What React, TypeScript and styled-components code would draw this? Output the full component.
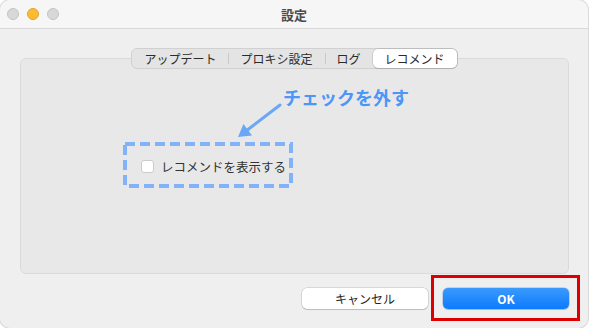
import styled, { createGlobalStyle } from 'styled-components';

const GlobalStyle = createGlobalStyle`
  html, body {
    margin: 0;
    background: #ffffff;
  }
  body {
    font-family: 'Noto Sans CJK JP', 'Noto Sans', sans-serif;
    -webkit-font-smoothing: antialiased;
  }
`;

const tabs = ['アップデート', 'プロキシ設定', 'ログ', 'レコメンド'];
const selectedTab = 3;

const App = () => {
  return (
    <>
      <GlobalStyle />
      <Window>
        <TitleBar>
          <Lights>
            <Light />
            <Light $color="#fdbc2f" $ring="#dea236" />
            <Light />
          </Lights>
          <Title>設定</Title>
          <span />
        </TitleBar>
        <Body>
          <TabView>
            <Segmented>
              {tabs.map((t, i) => (
                <Tab key={t} $selected={i === selectedTab} $divider={i > 0 && i !== selectedTab && i - 1 !== selectedTab}>
                  {t}
                </Tab>
              ))}
            </Segmented>
            <Panel>
              <Highlight>
                <DashedFrame width="170" height="46" viewBox="0 0 170 46">
                  <rect x="2" y="2" width="166" height="42" fill="none" stroke="#80b3fa" strokeWidth="4" strokeDasharray="10 5" />
                </DashedFrame>
                <Callout>チェックを外す</Callout>
                <Arrow width="54" height="42" viewBox="0 0 54 42">
                  <line x1="47" y1="5" x2="15" y2="29.5" stroke="#6aa7f7" strokeWidth="3" strokeLinecap="round" />
                  <polygon points="5,37 19,35.5 10.5,24" fill="#6aa7f7" />
                </Arrow>
                <CheckRow>
                  <CheckBox />
                  <CheckLabel>レコメンドを表示する</CheckLabel>
                </CheckRow>
              </Highlight>
            </Panel>
          </TabView>
          <ButtonRow>
            <Button>キャンセル</Button>
            <Marked>
              <Button $primary>OK</Button>
              <RedBox />
            </Marked>
          </ButtonRow>
        </Body>
      </Window>
    </>
  );
};

export default App;

const Window = styled.div`
  width: 588px;
  height: 328px;
  display: flex;
  flex-direction: column;
  background-color: #efefef;
  border-radius: 10px;
  box-shadow: 0 0 0 1px #dadada;
  overflow: hidden;
`;

const TitleBar = styled.div`
  height: 28px;
  display: grid;
  grid-template-columns: 1fr auto 1fr;
  align-items: center;
  background-color: #f6f6f6;
  border-bottom: 1px solid #d9d9d9;
`;

const Lights = styled.div`
  display: flex;
  gap: 8px;
  padding-left: 7px;
`;

const Light = styled.span<{ $color?: string; $ring?: string }>`
  width: 12px;
  height: 12px;
  border-radius: 50%;
  box-sizing: border-box;
  background-color: ${({ $color }) => $color || '#d8d8d8'};
  border: 1px solid ${({ $ring }) => $ring || '#c4c4c4'};
`;

const Title = styled.div`
  font-size: 13px;
  font-weight: 600;
  color: #4a4a4a;
`;

const Body = styled.div`
  flex: 1;
  display: flex;
  flex-direction: column;
  padding: 19px 19px 19px 20px;
`;

const TabView = styled.div`
  display: flex;
  flex-direction: column;
  align-items: center;
`;

const Segmented = styled.div`
  position: relative;
  z-index: 1;
  display: flex;
  align-items: stretch;
  height: 21px;
  box-sizing: border-box;
  margin-bottom: -11px;
  background-color: #e4e4e4;
  border: 1px solid #d0d0d0;
  border-radius: 6px;
`;

const Tab = styled.div<{ $selected?: boolean; $divider?: boolean }>`
  position: relative;
  display: flex;
  align-items: center;
  padding: 0 12px;
  font-size: 12px;
  color: #2b2b2b;
  border-radius: 5px;
  background-color: ${({ $selected }) => ($selected ? '#ffffff' : 'transparent')};
  box-shadow: ${({ $selected }) =>
    $selected ? '0 0 0 0.5px rgba(0, 0, 0, 0.18), 0 1px 1px rgba(0, 0, 0, 0.08)' : 'none'};

  &::before {
    content: '';
    display: ${({ $divider }) => ($divider ? 'block' : 'none')};
    position: absolute;
    left: 0;
    top: 4px;
    bottom: 4px;
    width: 1px;
    background-color: #c9c9c9;
  }
`;

const Panel = styled.div`
  align-self: stretch;
  height: 216px;
  box-sizing: border-box;
  padding: 83px 0 0 102px;
  background-color: #e8e8e8;
  border: 1px solid #dadada;
  border-radius: 6px;
`;

const Highlight = styled.div`
  position: relative;
  width: 170px;
  height: 46px;
  box-sizing: border-box;
  display: flex;
  align-items: center;
  padding: 2px 0 0 18px;
`;

const DashedFrame = styled.svg`
  position: absolute;
  left: 0;
  top: 0;
`;

const Callout = styled.div`
  position: absolute;
  left: 160px;
  top: -54px;
  font-size: 18px;
  line-height: 18px;
  font-weight: 700;
  color: #4b96f6;
  white-space: nowrap;
`;

const Arrow = styled.svg`
  position: absolute;
  left: 110px;
  top: -42px;
`;

const CheckRow = styled.div`
  display: flex;
  align-items: center;
  gap: 7px;
`;

const CheckBox = styled.span`
  width: 13px;
  height: 13px;
  box-sizing: border-box;
  background-color: #ffffff;
  border: 1px solid #cbcbcb;
  border-radius: 3px;
`;

const CheckLabel = styled.span`
  font-size: 12.5px;
  color: #333333;
  white-space: nowrap;
`;

const ButtonRow = styled.div`
  display: flex;
  justify-content: flex-end;
  gap: 15px;
  margin-top: 14px;
`;

const Marked = styled.div`
  position: relative;
  display: flex;
`;

const Button = styled.button<{ $primary?: boolean }>`
  width: 126px;
  height: 21px;
  padding: 0;
  border: none;
  border-radius: 5px;
  font-family: 'Noto Sans CJK JP', 'Noto Sans', sans-serif;
  font-size: 12px;
  font-weight: ${({ $primary }) => ($primary ? 600 : 400)};
  color: ${({ $primary }) => ($primary ? '#ffffff' : '#262626')};
  background: ${({ $primary }) =>
    $primary ? 'linear-gradient(#3a9afd, #0d7bfe)' : '#ffffff'};
  box-shadow: ${({ $primary }) =>
    $primary
      ? '0 0 0 0.5px rgba(0, 90, 220, 0.4), 0 1px 1px rgba(0, 0, 0, 0.12)'
      : '0 0 0 0.5px rgba(0, 0, 0, 0.2), 0 1px 1px rgba(0, 0, 0, 0.12)'};
`;

const RedBox = styled.div`
  position: absolute;
  top: -13px;
  right: -11px;
  bottom: -12px;
  left: -12px;
  border: 3px solid #de0000;
`;
